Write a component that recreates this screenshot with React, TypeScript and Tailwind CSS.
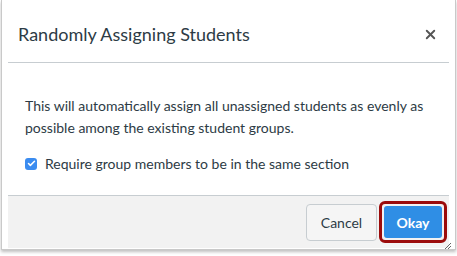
import { Check, X } from "lucide-react";

export default function App() {
  return (
    <div className="h-[256px] w-[457px] overflow-hidden bg-white font-['Lato','Liberation_Sans',sans-serif] text-[#2d3b45]">
      <div className="ml-[1px] h-[250px] w-[455px] border-x border-b border-[#c9c9c9] px-[6px] shadow-[0_2px_3px_rgba(0,0,0,0.25)]">
        <div className="flex h-[63px] items-center justify-between border-b border-[#c7cdd1] pl-[10px] pr-[11px] pt-[6px]">
          <h2 className="text-[18px] leading-none">Randomly Assigning Students</h2>
          <X className="h-[15px] w-[15px] text-[#555]" strokeWidth={3} />
        </div>

        <div className="h-[132px] px-[17px] pt-[32px]">
          <p className="text-[14px] leading-[22px]">
            This will automatically assign all unassigned students as evenly as possible among the existing student groups.
          </p>
          <label className="mt-[14px] flex items-center gap-[8px] text-[14px]">
            <span className="flex h-[12px] w-[12px] items-center justify-center rounded-[3px] bg-[#3b8cf0]">
              <Check className="h-[9px] w-[9px] text-white" strokeWidth={4} />
            </span>
            Require group members to be in the same section
          </label>
        </div>

        <div className="relative flex h-[53px] items-center justify-end gap-[2px] border-t border-[#c7cdd1] bg-[#f2f2f2] pr-[2px]">
          <button className="h-[37px] w-[71px] rounded-[4px] border border-[#c7cdd1] bg-[#f5f5f5] text-[14px] text-[#2d3b45]">
            Cancel
          </button>
          <div className="rounded-[6px] border-[3px] border-[#9b0b0b] p-[2px]">
            <button className="h-[32px] w-[58px] rounded-[3px] bg-[#2f8ee5] text-[14px] font-bold text-white">
              Okay
            </button>
          </div>
          <svg className="absolute bottom-[-2px] right-[-3px]" width="8" height="8" viewBox="0 0 8 8">
            <path d="M1 7 L7 1 M4 7 L7 4" stroke="#666" strokeWidth="1" />
          </svg>
        </div>
      </div>
    </div>
  );
}
